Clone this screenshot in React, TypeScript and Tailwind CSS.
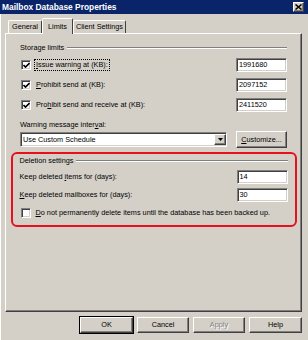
import type { ReactNode } from "react";

const sunken =
  "border border-t-[#808080] border-l-[#808080] border-b-white border-r-white shadow-[inset_1px_1px_0_#404040,inset_-1px_-1px_0_#d4d0c8]";
const raised =
  "border border-t-white border-l-white border-b-[#404040] border-r-[#404040] shadow-[inset_-1px_-1px_0_#808080]";

function U({ children }: { children: ReactNode }) {
  return <span className="underline underline-offset-1">{children}</span>;
}

function CheckBox({ checked }: { checked: boolean }) {
  return (
    <span className={`flex h-[10px] w-[10px] shrink-0 items-center justify-center bg-white ${sunken}`}>
      {checked && (
        <svg width="7" height="7" viewBox="0 0 7 7">
          <path d="M0.5 3 L2.5 5 L6.5 1" fill="none" stroke="#000" strokeWidth="1.6" />
        </svg>
      )}
    </span>
  );
}

function TextBox({ value }: { value: string }) {
  return (
    <div className={`flex h-[14px] w-[51px] items-center bg-white pl-[2px] ${sunken}`}>{value}</div>
  );
}

function GroupHeader({ label }: { label: string }) {
  return (
    <div className="flex h-[10px] items-center gap-[3px]">
      <span>{label}</span>
      <div className="flex-1 border-t border-t-[#808080] border-b border-b-white" />
    </div>
  );
}

function Button({ children, wide, primary, disabled }: { children: ReactNode; wide?: boolean; primary?: boolean; disabled?: boolean }) {
  return (
    <div
      className={`flex h-[16px] items-center justify-center ${wide ? "w-[53px]" : "w-[52px]"} ${
        primary ? "outline outline-1 outline-black" : ""
      } ${raised} ${disabled ? "text-[#808080] [text-shadow:1px_1px_0_#fff]" : ""}`}
    >
      {children}
    </div>
  );
}

export default function App() {
  return (
    <div
      className="flex h-[340px] w-[308px] flex-col overflow-hidden bg-[#d4d0c8] text-[7.3px] leading-none text-black"
      style={{ fontFamily: '"Liberation Sans", Arial, sans-serif' }}
    >
      {/* title bar */}
      <div className="flex h-[14px] items-center justify-between bg-[#0a246a] pl-[2px] pr-[4px]">
        <span className="text-[8.4px] font-bold text-white">Mailbox Database Properties</span>
        <div className={`flex h-[10px] w-[11px] items-center justify-center bg-[#d4d0c8] ${raised}`}>
          <svg width="7" height="6" viewBox="0 0 7 6">
            <path d="M0.5 0.5 L6.5 5.5 M6.5 0.5 L0.5 5.5" stroke="#000" strokeWidth="1.5" />
          </svg>
        </div>
      </div>

      <div className="flex flex-1 flex-col border-l border-l-white pl-[4px] pr-[6px]">
        {/* tabs */}
        <div className="mt-[4px] flex h-[15px] items-end pl-[3px]">
          <div className="flex h-[13px] w-[34px] items-center justify-center rounded-t-[2px] border border-b-0 border-t-white border-l-white border-r-[#404040]">
            General
          </div>
          <div className="relative z-10 -mb-px flex h-[16px] w-[31px] items-center justify-center rounded-t-[2px] border border-b-0 border-t-white border-l-white border-r-[#404040] bg-[#d4d0c8]">
            Limits
          </div>
          <div className="flex h-[13px] w-[53px] items-center justify-center rounded-t-[2px] border border-b-0 border-t-white border-l-white border-r-[#404040]">
            Client Settings
          </div>
        </div>

        {/* panel */}
        <div className="flex h-[279px] flex-col border border-t-white border-l-white border-r-[#404040] border-b-[#404040] pl-[14px] pr-[14px] shadow-[inset_-1px_-1px_0_#808080]">
          <div className="mt-[9px]">
            <GroupHeader label="Storage limits" />
          </div>

          <div className="mt-[5px] flex flex-col gap-[6px]">
            <div className="flex h-[14px] items-center justify-between">
              <div className="flex items-center gap-[4px] pl-[1px]">
                <CheckBox checked />
                <span className="outline outline-1 outline-dotted outline-black px-[1px] py-[1px]">
                  <U>I</U>ssue warning at (KB):
                </span>
              </div>
              <TextBox value="1991680" />
            </div>
            <div className="flex h-[14px] items-center justify-between">
              <div className="flex items-center gap-[4px] pl-[1px]">
                <CheckBox checked />
                <span className="px-[1px]">
                  <U>P</U>rohibit send at (KB):
                </span>
              </div>
              <TextBox value="2097152" />
            </div>
            <div className="flex h-[14px] items-center justify-between">
              <div className="flex items-center gap-[4px] pl-[1px]">
                <CheckBox checked />
                <span className="px-[1px]">
                  Pro<U>h</U>ibit send and receive at (KB):
                </span>
              </div>
              <TextBox value="2411520" />
            </div>
          </div>

          <div className="mt-[8px] flex h-[10px] items-center">
            Warning message inter<U>v</U>al:
          </div>

          <div className="mt-[1px] flex h-[17px] items-center justify-between">
            <div className={`flex h-[15px] w-[207px] items-center justify-between bg-white pl-[2px] ${sunken}`}>
              <span>Use Custom Schedule</span>
              <div className={`flex h-[11px] w-[12px] items-center justify-center bg-[#d4d0c8] ${raised}`}>
                <svg width="5" height="3" viewBox="0 0 5 3">
                  <path d="M0 0 H5 L2.5 3 Z" fill="#000" />
                </svg>
              </div>
            </div>
            <div className={`flex h-[17px] w-[51px] items-center justify-center ${raised}`}>
              <span>
                <U>C</U>ustomize...
              </span>
            </div>
          </div>

          {/* highlighted deletion settings */}
          <div className="mt-[4px] -ml-[9px] -mr-[10px] flex flex-col rounded-[6px] border-[2.5px] border-[#e8101c] pl-[6.5px] pr-[7.5px] pt-[1.5px] pb-[6.5px]">
            <GroupHeader label="Deletion settings" />
            <div className="mt-[4px] flex h-[14px] items-center justify-between">
              <span>
                Keep deleted <U>i</U>tems for (days):
              </span>
              <TextBox value="14" />
            </div>
            <div className="mt-[4px] flex h-[14px] items-center justify-between">
              <span>
                <U>K</U>eep deleted mailboxes for (days):
              </span>
              <TextBox value="30" />
            </div>
            <div className="mt-[5px] flex h-[12px] items-center gap-[5px] pl-[1px]">
              <CheckBox checked={false} />
              <span>
                <U>D</U>o not permanently delete items until the database has been backed up.
              </span>
            </div>
          </div>
        </div>

        {/* dialog buttons */}
        <div className="mt-[5px] flex justify-end gap-[4px]">
          <Button wide primary>
            OK
          </Button>
          <Button>Cancel</Button>
          <Button disabled>Apply</Button>
          <Button wide>Help</Button>
        </div>
      </div>
    </div>
  );
}
